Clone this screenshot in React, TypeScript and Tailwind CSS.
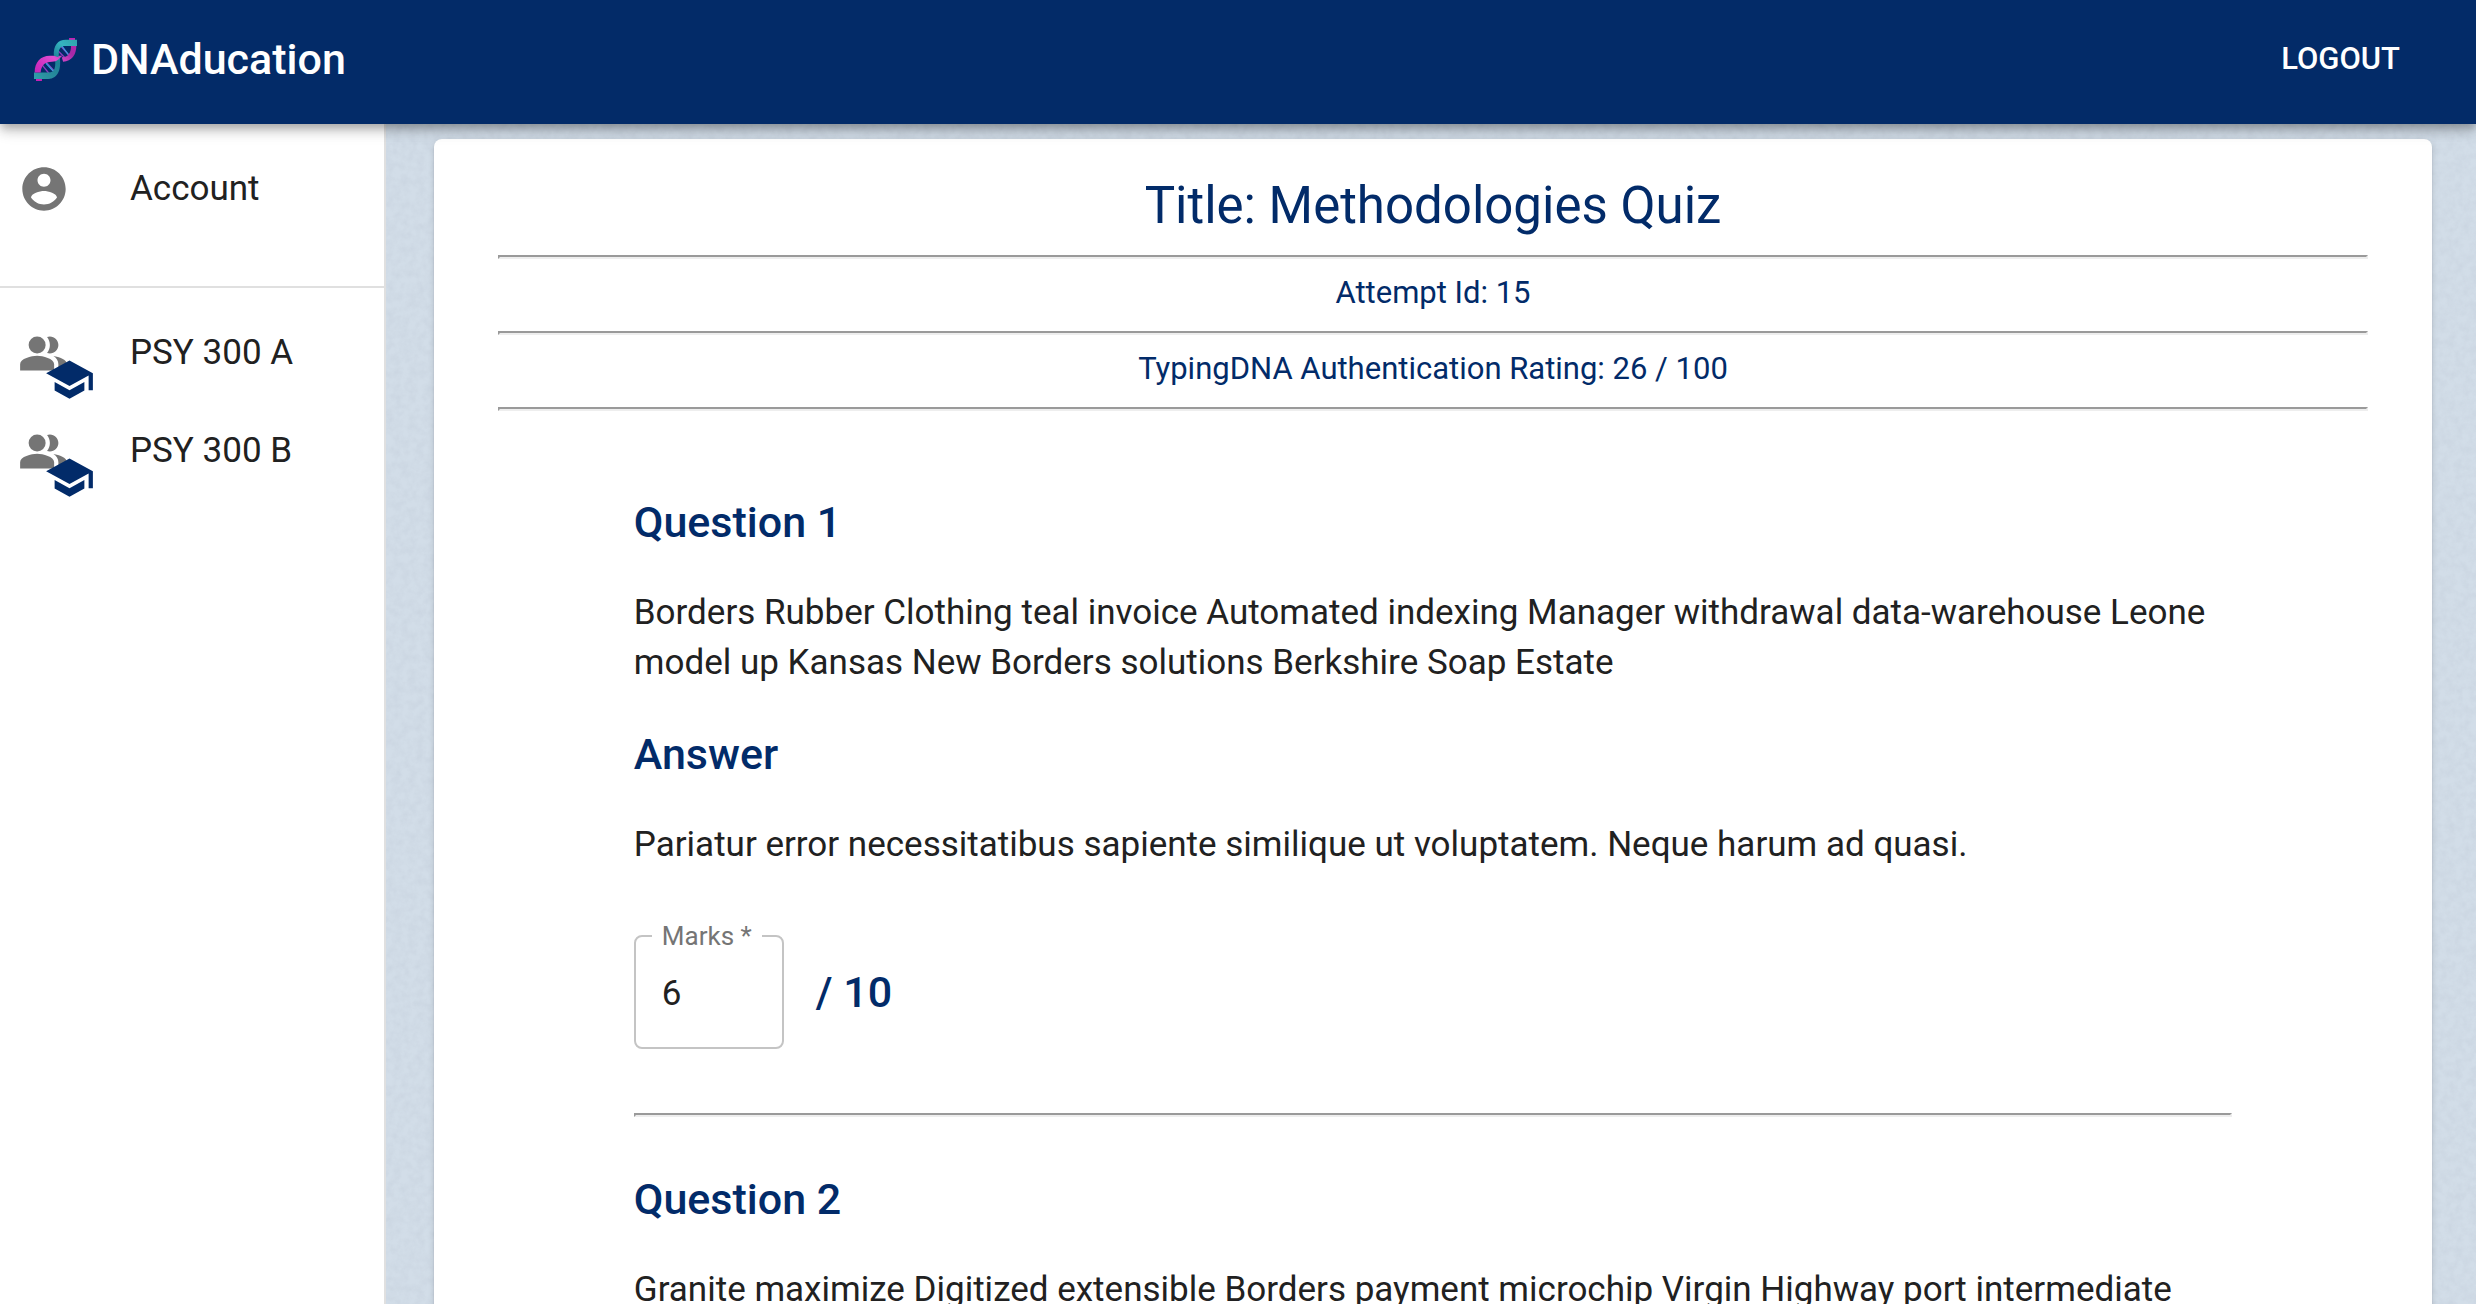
import { useId, useState } from "react";

function DnaLogo() {
  const id = useId();
  return (
    <svg viewBox="0 0 130 130" className="size-[43px] shrink-0" fill="none" aria-hidden="true">
      <defs>
        <linearGradient id={`${id}t`} x1="0" y1="130" x2="130" y2="0" gradientUnits="userSpaceOnUse">
          <stop offset="0" stopColor="#2fa3ad" />
          <stop offset="0.2" stopColor="#2b8f9f" />
          <stop offset="0.5" stopColor="#1c7f95" />
          <stop offset="0.75" stopColor="#35b5c0" />
          <stop offset="1" stopColor="#2f9fa8" />
        </linearGradient>
        <linearGradient id={`${id}p`} x1="0" y1="130" x2="130" y2="0" gradientUnits="userSpaceOnUse">
          <stop offset="0" stopColor="#b81fb0" />
          <stop offset="0.25" stopColor="#d02fc0" />
          <stop offset="0.5" stopColor="#e04fd0" />
          <stop offset="0.75" stopColor="#a52aa6" />
          <stop offset="1" stopColor="#c022b0" />
        </linearGradient>
      </defs>
      <path d="M22 78 46 108M34 70 62 100" stroke="#8a3cc0" strokeWidth="4" />
      <path d="M70 36 92 58M82 26 106 52" stroke="#8a3cc0" strokeWidth="4" />
      <path d="M36 76 60 102M84 24 104 50" stroke="#3f9be0" strokeWidth="4" />
      <path d="M106 0h18v10h-18zM6 120h18v10H6z" fill="#c71fb4" />
      <path d="M128 24C128 50 114 70 88 72L84 58C104 58 112 44 112 24Z" fill={`url(#${id}p)`} />
      <path d="M64 68 78 60C82 90 76 124 42 124L40 108C60 108 66 92 64 68Z" fill={`url(#${id}t)`} />
      <path d="M0 104H42C54 104 62 100 66 92 64 112 54 124 36 124H0Z" fill={`url(#${id}t)`} />
      <path d="M2 104C2 74 20 54 48 54H86C76 62 72 72 54 72 32 72 22 84 20 104Z" fill={`url(#${id}p)`} />
      <path d="M130 5V24H94C82 24 74 32 75 48L74 58 60 54C58 22 72 5 96 5Z" fill={`url(#${id}t)`} />
    </svg>
  );
}

function AccountIcon() {
  return (
    <svg viewBox="0 0 24 24" className="size-[52px]" fill="currentColor" aria-hidden="true">
      <path d="M12 2C6.48 2 2 6.48 2 12s4.48 10 10 10 10-4.48 10-10S17.52 2 12 2zm0 3c1.66 0 3 1.34 3 3s-1.34 3-3 3-3-1.34-3-3 1.34-3 3-3zm0 14.2c-2.5 0-4.71-1.28-6-3.22.03-1.99 4-3.08 6-3.08 1.99 0 5.97 1.09 6 3.08-1.29 1.94-3.5 3.22-6 3.22z" />
    </svg>
  );
}

function ClassIcon() {
  return (
    <span className="relative block size-[51px]">
      <svg viewBox="0 0 24 24" className="size-[51px]" fill="currentColor" aria-hidden="true">
        <path d="M16.67 13.13C18.04 14.06 19 15.32 19 17v3h4v-3c0-2.18-3.57-3.47-6.33-3.87z" />
        <circle cx="9" cy="8" r="4" />
        <path d="M15 12c2.21 0 4-1.79 4-4s-1.79-4-4-4c-.47 0-.91.1-1.33.24C14.5 5.27 15 6.58 15 8s-.5 2.73-1.33 3.76c.42.14.86.24 1.33.24zM9 13c-2.67 0-8 1.34-8 4v3h16v-3c0-2.66-5.33-4-8-4z" />
      </svg>
      <svg
        viewBox="0 0 24 24"
        className="absolute top-[26px] left-[26px] size-[51px] text-[#022b69]"
        fill="currentColor"
        aria-hidden="true"
      >
        <path d="M5 13.18v4L12 21l7-3.82v-4L12 17l-7-3.82zM12 3L1 9l11 6 9-4.91V17h2V9L12 3z" />
      </svg>
    </span>
  );
}

function PaperTexture() {
  const id = useId();
  return (
    <svg className="absolute inset-0 size-full opacity-40" aria-hidden="true">
      <filter id={id} x="0" y="0" width="100%" height="100%" colorInterpolationFilters="sRGB">
        <feTurbulence type="fractalNoise" baseFrequency="0.13" numOctaves="3" />
        <feColorMatrix values="0 0 0 0 0.74  0 0 0 0 0.78  0 0 0 0 0.83  0 0 0 1.4 -0.45" />
      </filter>
      <rect width="100%" height="100%" filter={`url(#${id})`} />
    </svg>
  );
}

function Rule() {
  return <hr className="h-1 border-2 border-t-[#9a9a9a] border-r-[#eeeeee] border-b-[#eeeeee] border-l-[#9a9a9a]" />;
}

function MarksField({ initial, total }: { initial: string; total: number }) {
  const id = useId();
  const [value, setValue] = useState(initial);
  return (
    <div className="flex items-center gap-8">
      <fieldset className="w-[150px] rounded-lg border-2 border-[#c4c4c4] px-4 pb-7">
        <legend className="px-[10px] text-[26px] leading-[30px] whitespace-nowrap text-[#757575]">
          <label htmlFor={id}>Marks *</label>
        </legend>
        <input
          id={id}
          required
          inputMode="numeric"
          value={value}
          onChange={(e) => setValue(e.target.value)}
          className="mt-[18px] block w-full pl-[10px] text-[35px] leading-[50px] text-[#212121] outline-none"
        />
      </fieldset>
      <span className="pt-[14px] text-[43px] leading-[66px] font-medium">/ {total}</span>
    </div>
  );
}

function NavItem({ icon, label }: { icon: React.ReactNode; label: string }) {
  return (
    <li>
      <a href="#" className="flex h-[98px] items-center pl-[18px]">
        <span className="w-28 shrink-0 text-[#757575]">{icon}</span>
        <span className="text-[35px] leading-[50px] text-[#212121]">{label}</span>
      </a>
    </li>
  );
}

const heading = "text-[43px] leading-[66px] font-medium";
const body = "text-[35px] leading-[50px] text-[#212121]";

export default function App() {
  return (
    <div className="flex h-screen flex-col overflow-hidden bg-white font-[Roboto,sans-serif] text-[#022b69]">
      <header className="relative z-10 flex h-[124px] shrink-0 items-center bg-[#032b68] pr-[76px] pb-[6px] pl-[34px] text-white shadow-[0_4px_8px_-2px_rgba(0,0,0,0.2),0_8px_10px_0_rgba(0,0,0,0.14),0_2px_20px_0_rgba(0,0,0,0.12)]">
        <a href="#" className="flex items-center gap-[14px]">
          <DnaLogo />
          <span className="text-[43px] leading-[66px] font-medium">DNAducation</span>
        </a>
        <button type="button" className="ml-auto text-[31px] leading-[52px] font-medium">
          LOGOUT
        </button>
      </header>

      <div className="flex min-h-0 grow">
        <nav className="w-[386px] shrink-0 border-r-2 border-[#e0e0e0]">
          <ul className="border-b-2 border-[#e0e0e0] pt-4 pb-12">
            <NavItem icon={<AccountIcon />} label="Account" />
          </ul>
          <ul className="pt-4">
            <NavItem icon={<ClassIcon />} label="PSY 300 A" />
            <NavItem icon={<ClassIcon />} label="PSY 300 B" />
          </ul>
        </nav>

        <main className="relative min-w-0 grow overflow-hidden bg-[#d2dde8] pt-[15px] pr-11 pl-12">
          <PaperTexture />
          <article className="relative rounded-lg bg-white pt-[33px] pb-16 shadow-[0_4px_2px_-2px_rgba(0,0,0,0.2),0_2px_2px_0_rgba(0,0,0,0.14),0_2px_6px_0_rgba(0,0,0,0.12)]">
            <div className="flex flex-col gap-4 px-16 text-center text-[31px] leading-9">
              <h1 className="text-[51px] leading-[67px]">Title: Methodologies Quiz</h1>
              <Rule />
              <p className="pb-1">Attempt Id: 15</p>
              <Rule />
              <p className="pb-1">TypingDNA Authentication Rating: 26 / 100</p>
              <Rule />
            </div>

            <section className="mx-[10%] mt-[78px] flex flex-col gap-[33px]">
              <h2 className={heading}>Question 1</h2>
              <p className={body}>
                Borders Rubber Clothing teal invoice Automated indexing Manager withdrawal data-warehouse Leone model
                up Kansas New Borders solutions Berkshire Soap Estate
              </p>
              <h3 className={heading}>Answer</h3>
              <p className={body}>
                Pariatur error necessitatibus sapiente similique ut voluptatem. Neque harum ad quasi.
              </p>
              <div className="mt-[18px] mb-[31px]">
                <MarksField initial="6" total={10} />
              </div>
              <Rule />
            </section>

            <section className="mx-[10%] mt-[49px] flex flex-col gap-[33px]">
              <h2 className={heading}>Question 2</h2>
              <p className={body}>
                Granite maximize Digitized extensible Borders payment microchip Virgin Highway port intermediate
              </p>
            </section>
          </article>
        </main>
      </div>
    </div>
  );
}
